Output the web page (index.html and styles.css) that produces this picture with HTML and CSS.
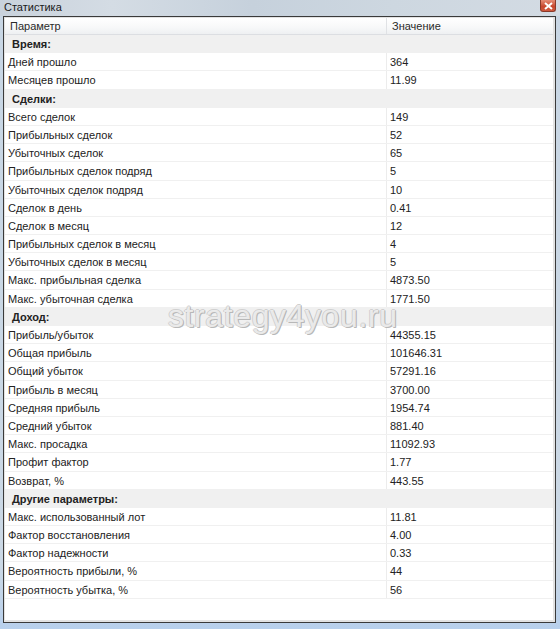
FILE: index.html
```html
<!DOCTYPE html>
<html lang="ru">
<head>
<meta charset="utf-8">
<title>Статистика</title>
<link rel="stylesheet" href="styles.css">
</head>
<body>
<div class="window">
  <div class="titlebar">
    <span class="title">Статистика</span>
    <span class="close"><svg width="9" height="8" viewBox="0 0 9 8"><path d="M1 1 L8 7 M8 1 L1 7" stroke="#fff" stroke-width="2"/></svg></span>
  </div>
  <div class="frame">
    <div class="panel">
      <div class="row head"><div class="c1">Параметр</div><div class="c2">Значение</div></div>
      <div class="row sec"><div class="c1">Время:</div><div class="c2"></div></div>
      <div class="row"><div class="c1">Дней прошло</div><div class="c2">364</div></div>
      <div class="row"><div class="c1">Месяцев прошло</div><div class="c2">11.99</div></div>
      <div class="row sec"><div class="c1">Сделки:</div><div class="c2"></div></div>
      <div class="row"><div class="c1">Всего сделок</div><div class="c2">149</div></div>
      <div class="row"><div class="c1">Прибыльных сделок</div><div class="c2">52</div></div>
      <div class="row"><div class="c1">Убыточных сделок</div><div class="c2">65</div></div>
      <div class="row"><div class="c1">Прибыльных сделок подряд</div><div class="c2">5</div></div>
      <div class="row"><div class="c1">Убыточных сделок подряд</div><div class="c2">10</div></div>
      <div class="row"><div class="c1">Сделок в день</div><div class="c2">0.41</div></div>
      <div class="row"><div class="c1">Сделок в месяц</div><div class="c2">12</div></div>
      <div class="row"><div class="c1">Прибыльных сделок в месяц</div><div class="c2">4</div></div>
      <div class="row"><div class="c1">Убыточных сделок в месяц</div><div class="c2">5</div></div>
      <div class="row"><div class="c1">Макс. прибыльная сделка</div><div class="c2">4873.50</div></div>
      <div class="row"><div class="c1">Макс. убыточная сделка</div><div class="c2">1771.50</div></div>
      <div class="row sec"><div class="c1">Доход:</div><div class="c2"></div></div>
      <div class="row"><div class="c1">Прибыль/убыток</div><div class="c2">44355.15</div></div>
      <div class="row"><div class="c1">Общая прибыль</div><div class="c2">101646.31</div></div>
      <div class="row"><div class="c1">Общий убыток</div><div class="c2">57291.16</div></div>
      <div class="row"><div class="c1">Прибыль в месяц</div><div class="c2">3700.00</div></div>
      <div class="row"><div class="c1">Средняя прибыль</div><div class="c2">1954.74</div></div>
      <div class="row"><div class="c1">Средний убыток</div><div class="c2">881.40</div></div>
      <div class="row"><div class="c1">Макс. просадка</div><div class="c2">11092.93</div></div>
      <div class="row"><div class="c1">Профит фактор</div><div class="c2">1.77</div></div>
      <div class="row"><div class="c1">Возврат, %</div><div class="c2">443.55</div></div>
      <div class="row sec"><div class="c1">Другие параметры:</div><div class="c2"></div></div>
      <div class="row"><div class="c1">Макс. использованный лот</div><div class="c2">11.81</div></div>
      <div class="row"><div class="c1">Фактор восстановления</div><div class="c2">4.00</div></div>
      <div class="row"><div class="c1">Фактор надежности</div><div class="c2">0.33</div></div>
      <div class="row"><div class="c1">Вероятность прибыли, %</div><div class="c2">44</div></div>
      <div class="row"><div class="c1">Вероятность убытка, %</div><div class="c2">56</div></div>
      <div class="watermark">strategy4you.ru</div>
    </div>
  </div>
</div>
</body>
</html>
```

FILE: styles.css
```css
html, body {
  margin: 0;
  padding: 0;
}
body {
  width: 560px;
  height: 629px;
  overflow: hidden;
  background: linear-gradient(90deg, #c3d2e0 0%, #d6dfe8 30%, #cfdbe6 60%, #d9e2ea 100%);
  font-family: "Liberation Sans", Arial, sans-serif;
  font-size: 11px;
  color: #222;
}
.window {
  display: flex;
  flex-direction: column;
  height: 629px;
  background: linear-gradient(180deg, #c8d6e4 0%, #cbd8e5 90%, #b8d0ec 100%);
}
.titlebar {
  height: 16px;
  display: flex;
  align-items: flex-start;
  justify-content: space-between;
  padding: 0 4px 0 4px;
  background: linear-gradient(90deg, #c9d2dc 0%, #d4dce4 20%, #c6d1dc 45%, #cdd7e0 70%, #d3dbe3 100%);
}
.title {
  font-size: 11px;
  line-height: 14px;
  color: #1a1a1a;
}
.close {
  width: 16px;
  height: 12px;
  display: flex;
  align-items: center;
  justify-content: center;
  background: linear-gradient(180deg, #e58d76 0%, #c8472e 60%, #d15a3f 100%);
  border: 1px solid #8a3a2a;
  border-top: none;
  border-radius: 0 0 3px 3px;
  box-sizing: border-box;
}
.frame {
  margin: 0 4px 6px 3px;
  height: 607px;
  box-sizing: border-box;
  border: 1px solid #3a3a3a;
  padding: 1px 2px 2px 1px;
  background: #e3e3e3;
}
.panel {
  position: relative;
  height: 100%;
  background: #fff;
  overflow: hidden;
}
.row {
  display: flex;
  height: 18.2px;
  line-height: 18px;
  border-bottom: 1px solid #f0f0f0;
  box-sizing: border-box;
}
.c1 {
  width: 382px;
  padding-left: 3px;
  box-sizing: border-box;
  border-right: 1px solid #ececec;
  white-space: nowrap;
}
.c2 {
  flex: 1;
  padding-left: 3px;
  white-space: nowrap;
}
.head {
  height: 17px;
  line-height: 17px;
  background: linear-gradient(180deg, #ffffff 0%, #f7f8f9 60%, #eef0f2 100%);
  border-bottom: 1px solid #dcdee2;
  color: #2a2a2a;
}
.head .c1 {
  padding-left: 5px;
  border-right: 1px solid #e0e2e5;
}
.head .c2 {
  padding-left: 5px;
}
.sec {
  background: #f0f0f0;
  border-bottom: 1px solid #f0f0f0;
  font-weight: bold;
}
.sec .c1 {
  padding-left: 7px;
  border-right: none;
}
.watermark {
  position: absolute;
  left: 163px;
  top: 281px;
  font-family: "Liberation Sans", Arial, sans-serif;
  font-size: 32px;
  line-height: 34px;
  letter-spacing: 0.6px;
  color: rgba(240, 240, 240, 0.9);
  text-shadow: 1px 1px 0 #b8b8b8, -1px 0 0 #d0d0d0, 0 -1px 0 #d0d0d0, 1px 0 0 #c0c0c0;
  pointer-events: none;
}
```
